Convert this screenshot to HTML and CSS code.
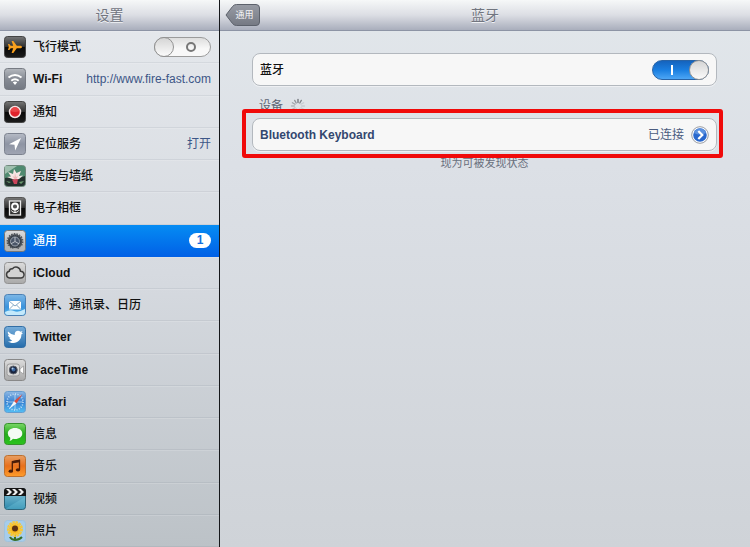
FILE: index.html
```
<!DOCTYPE html>
<html lang="zh-CN">
<head>
  <meta charset="UTF-8" />
  <meta name="viewport" content="width=device-width, initial-scale=1.0" />
  <title>设置</title>
  <link rel="stylesheet" href="styles.css">
</head>
<body>

  <!-- shared gradients -->
  <svg class="defs" width="0" height="0" aria-hidden="true">
    <defs>
      <linearGradient id="g-black" x2="0" y2="1"><stop offset="0" stop-color="#777"/><stop offset=".5" stop-color="#2d2d2d"/><stop offset=".52" stop-color="#080808"/><stop offset="1" stop-color="#1c1c1c"/></linearGradient>
      <linearGradient id="g-gray" x2="0" y2="1"><stop offset="0" stop-color="#b4b8be"/><stop offset=".5" stop-color="#868b94"/><stop offset="1" stop-color="#747983"/></linearGradient>
      <linearGradient id="g-steel" x2="0" y2="1"><stop offset="0" stop-color="#b6bbc6"/><stop offset=".5" stop-color="#8d94a3"/><stop offset="1" stop-color="#a0a5b3"/></linearGradient>
      <linearGradient id="g-silver" x2="0" y2="1"><stop offset="0" stop-color="#dcdcdc"/><stop offset="1" stop-color="#a9a9a9"/></linearGradient>
      <linearGradient id="g-sky" x2="0" y2="1"><stop offset="0" stop-color="#7db7e6"/><stop offset=".6" stop-color="#3b93dc"/><stop offset="1" stop-color="#4bb9f2"/></linearGradient>
      <linearGradient id="g-twitter" x2="0" y2="1"><stop offset="0" stop-color="#78aedb"/><stop offset="1" stop-color="#256cab"/></linearGradient>
      <linearGradient id="g-safari" x2="0" y2="1"><stop offset="0" stop-color="#8fb9e4"/><stop offset=".5" stop-color="#3580d2"/><stop offset="1" stop-color="#55c0f5"/></linearGradient>
      <linearGradient id="g-green" x2="0" y2="1"><stop offset="0" stop-color="#7bd767"/><stop offset=".5" stop-color="#24ab1c"/><stop offset="1" stop-color="#2bc41e"/></linearGradient>
      <linearGradient id="g-orange" x2="0" y2="1"><stop offset="0" stop-color="#e8a065"/><stop offset=".5" stop-color="#e8701c"/><stop offset="1" stop-color="#ff9d2b"/></linearGradient>
      <linearGradient id="g-video" x2="0" y2="1"><stop offset="0" stop-color="#8cc7da"/><stop offset="1" stop-color="#2a87ab"/></linearGradient>
      <linearGradient id="g-back" x2="0" y2="1"><stop offset="0" stop-color="#989ca5"/><stop offset="1" stop-color="#757983"/></linearGradient>
    </defs>
  </svg>

  <aside class="sidebar">
    <header class="bar">
      <h1>设置</h1>
    </header>
    <ul class="menu">
      <li>
        <label class="row" for="airplane">
          <svg class="icon" viewBox="0 0 22 22"><rect x=".5" y=".5" width="21" height="21" rx="3" fill="url(#g-black)" stroke="#444"/><path d="M18 11c0-1-1-1.300-2-1.300h-3.200L9.300 5H7.600l1.600 4.700H6.700L5.300 8H4l.8 3-.8 3h1.300l1.400-1.700h2.500L7.600 17h1.700l3.500-4.700H16c1 0 2-.3 2-1.300z" fill="#f9a01e"/></svg>
          <span class="name">飞行模式</span>
          <input class="switch" type="checkbox" id="airplane">
        </label>
      </li>
      <li>
        <a class="row" href="#wifi">
          <svg class="icon" viewBox="0 0 22 22"><rect x=".5" y=".5" width="21" height="21" rx="3" fill="url(#g-gray)" stroke="#777b83"/><g fill="none" stroke="#fff" stroke-width="2"><path d="M4.500 9.500q6.500-5 13 0M7.300 12.700q3.700-3 7.400 0"/></g><path d="M8.800 14.300q2.200-1.600 4.400 0L11 17z" fill="#fff"/></svg>
          <span class="name latin">Wi-Fi</span>
          <span class="value">http://www.fire-fast.com</span>
        </a>
      </li>
      <li>
        <a class="row" href="#notifications">
          <svg class="icon" viewBox="0 0 22 22"><rect x=".5" y=".5" width="21" height="21" rx="3" fill="url(#g-black)" stroke="#444"/><circle cx="11" cy="11" r="5.500" fill="#e0222b" stroke="#f4e4e4" stroke-width="1.500"/><path d="M6.500 10a4.600 4.600 0 0 1 9 0q-4.500 2-9 0z" fill="#ea4548"/></svg>
          <span class="name">通知</span>
        </a>
      </li>
      <li>
        <a class="row" href="#location">
          <svg class="icon" viewBox="0 0 22 22"><rect x=".5" y=".5" width="21" height="21" rx="3" fill="url(#g-steel)" stroke="#7c828f"/><path d="M17 5L5 11.300l5.500.5.700 5.700z" fill="#fff"/></svg>
          <span class="name">定位服务</span>
          <span class="value">打开</span>
        </a>
      </li>
      <li>
        <a class="row" href="#wallpaper">
          <svg class="icon" viewBox="0 0 22 22"><rect x=".5" y=".5" width="21" height="21" rx="3" fill="#4f8a70" stroke="#70877b"/><path d="M1 1h12L1 9z" fill="#9fbfae"/><path d="M1 13l6-1 8 1 6-2v7q0 3-3 3H4q-3 0-3-3z" fill="#24312e"/><path d="M11 15L3 12l4-.5L4 7l5 2 1-5 2.500 4L17 6l-2 5 4-.5-4 3.500z" fill="#f7e6e4"/><path d="M11 15L8.500 11l2 1 .5-4 1 4 2-1-2 4z" fill="#eeb9b8"/><path d="M8 14.500l6-.5-1 5h-3z" fill="#c9455a"/><path d="M2 16l5 1-2 1zM15 17l5-1-3 3z" fill="#6d9d70"/></svg>
          <span class="name">亮度与墙纸</span>
        </a>
      </li>
      <li>
        <a class="row" href="#frame">
          <svg class="icon" viewBox="0 0 22 22"><rect x=".5" y=".5" width="21" height="21" rx="3" fill="url(#g-black)" stroke="#555"/><rect x="5.500" y="4" width="11" height="14" fill="#333" stroke="#e9e9e9" stroke-width="1.300"/><circle cx="11" cy="9.500" r="3" fill="#555" stroke="#fff" stroke-width="1.800"/><path d="M11 12v4M11 15.500q-3 0-3.500-2M11 15.500q3 0 3.500-2" fill="none" stroke="#fff"/></svg>
          <span class="name">电子相框</span>
        </a>
      </li>
      <li>
        <a class="row active" href="#general" aria-current="page">
          <svg class="icon" viewBox="0 0 22 22"><rect x=".5" y=".5" width="21" height="21" rx="3" fill="url(#g-silver)" stroke="#777"/><circle cx="11" cy="11.500" r="7.200" fill="#39404a" stroke="#52565b" stroke-width="2.500" stroke-dasharray="1.500 1"/><circle cx="11" cy="11.500" r="4.500" fill="#4b5668" stroke="#98a0aa"/><path d="M11 7v4.500l-4 2.300M11 11.500l4 2.300" stroke="#b9bec6" fill="none"/><path d="M1 15l4 1 2 3 4-1 4 1 2-3 4-1v3q0 3-3 3H4q-3 0-3-3z" fill="#b4b5b6"/></svg>
          <span class="name">通用</span>
          <span class="badge">1</span>
        </a>
      </li>
      <li>
        <a class="row" href="#icloud">
          <svg class="icon" viewBox="0 0 22 22"><rect x=".5" y=".5" width="21" height="21" rx="3" fill="url(#g-silver)" stroke="#929292"/><path d="M5.500 16a3.400 3.400 0 0 1-.3-6.700 3 3 0 0 1 3.300-2.500 4.500 4.500 0 0 1 8 2.400A3.400 3.400 0 0 1 16.800 16z" fill="#d3d3d3" stroke="#3d3d3d" stroke-width="1.500"/></svg>
          <span class="name latin">iCloud</span>
        </a>
      </li>
      <li>
        <a class="row" href="#mail">
          <svg class="icon" viewBox="0 0 22 22"><rect x=".5" y=".5" width="21" height="21" rx="3" fill="url(#g-sky)" stroke="#4b80b5"/><path d="M1 18q5-3 9-1t11-2v3q0 3-3 3H4q-3 0-3-3z" fill="#c4e9fb"/><rect x="5" y="7" width="12" height="8.500" fill="#fff"/><path d="M5 7l6 5 6-5M5 15.500l4.500-4.500M17 15.500L12.500 11" stroke="#87aac6" fill="none"/></svg>
          <span class="name">邮件、通讯录、日历</span>
        </a>
      </li>
      <li>
        <a class="row" href="#twitter">
          <svg class="icon" viewBox="0 0 22 22"><rect x=".5" y=".5" width="21" height="21" rx="3" fill="url(#g-twitter)" stroke="#326ea5"/><path d="M4 5.500q2.800 3.200 6.700 3.400c-.5-3.800 3.600-5.300 5.800-3.100l2-.7-1 2 1.500-.2-1.600 1.700c0 5-3.400 8.400-8 8.400-2.400 0-4.200-.6-5.400-1.500 1.700.1 3.200-.3 4.300-1.300-1.500-.2-2.500-1-2.900-2.200h1.300C5 11.500 4.100 10.300 4 8.800l1.300.4C4 8.100 3.500 6.800 4 5.500z" fill="#fff"/></svg>
          <span class="name latin">Twitter</span>
        </a>
      </li>
      <li>
        <a class="row" href="#facetime">
          <svg class="icon" viewBox="0 0 22 22"><rect x=".5" y=".5" width="21" height="21" rx="3" fill="url(#g-silver)" stroke="#888"/><rect x="3" y="5" width="12.500" height="12" rx="2.500" fill="#d9d9d9" stroke="#999"/><path d="M16 10l3.500-3v8L16 12.500z" fill="#fff" stroke="#888" stroke-width=".6"/><circle cx="9.300" cy="11" r="4" fill="#18223c" stroke="#60656e"/><circle cx="9.500" cy="10.500" r="2" fill="#38649c"/><circle cx="8.500" cy="9.500" r="1" fill="#b5cee8"/></svg>
          <span class="name latin">FaceTime</span>
        </a>
      </li>
      <li>
        <a class="row" href="#safari">
          <svg class="icon" viewBox="0 0 22 22"><rect x=".5" y=".5" width="21" height="21" rx="3" fill="url(#g-safari)" stroke="#669cce"/><g stroke="#cde6f8" fill="none"><circle cx="11" cy="11" r="8" stroke-dasharray="1 1.500" stroke-width="1.500"/><path d="M11 3v16M3 11h16" stroke-width=".7"/></g><path d="M18.500 3l-6 9.500-2.500-2.300z" fill="#dc4b3d"/><path d="M5 18l5-7.800 2.500 2.300z" fill="#f4f8fa"/></svg>
          <span class="name latin">Safari</span>
        </a>
      </li>
      <li>
        <a class="row" href="#messages">
          <svg class="icon" viewBox="0 0 22 22"><rect x=".5" y=".5" width="21" height="21" rx="3" fill="url(#g-green)" stroke="#37912d"/><path d="M11 5c4.300 0 7.300 2.400 7.300 5.500S15.300 16 11 16q-1 0-2-.2Q7.500 17.800 5.500 18q1-1.300.8-3.200Q3.800 13 3.800 10.500C3.800 7.400 6.700 5 11 5z" fill="#f5fbf4"/></svg>
          <span class="name">信息</span>
        </a>
      </li>
      <li>
        <a class="row" href="#music">
          <svg class="icon" viewBox="0 0 22 22"><rect x=".5" y=".5" width="21" height="21" rx="3" fill="url(#g-orange)" stroke="#bc702f"/><path d="M8.300 16V6.800l7.200-1.300v9" fill="none" stroke="#4a1c08" stroke-width="1.300"/><path d="M8 6l8-1.400v2.600L8 8.600z" fill="#4a1c08"/><ellipse cx="6.800" cy="16.200" rx="2.200" ry="1.600" fill="#4a1c08"/><ellipse cx="14" cy="14.800" rx="2.200" ry="1.600" fill="#4a1c08"/></svg>
          <span class="name">音乐</span>
        </a>
      </li>
      <li>
        <a class="row" href="#videos">
          <svg class="icon" viewBox="0 0 22 22"><rect x=".5" y=".5" width="21" height="21" rx="3" fill="url(#g-video)" stroke="#2d6479"/><path d="M1 21L21 9v9q0 3-3 3z" fill="#7fd0e4" opacity=".3"/><path d="M0 8V3q0-3 3-3h16q3 0 3 3v5z" fill="#151515"/><path d="M2 1h3l3 3-3 3H2l3-3zM8 1h3l3 3-3 3H8l3-3zM14 1h3l3 3-3 3h-3l3-3z" fill="#eee"/></svg>
          <span class="name">视频</span>
        </a>
      </li>
      <li>
        <a class="row" href="#photos">
          <svg class="icon" viewBox="0 0 22 22"><rect x=".5" y=".5" width="21" height="21" rx="3" fill="#a6cdec" stroke="#a0c2dc"/><path d="M11 12v9M11 20q-4-.5-5-3M11 20q4 0 7-3" stroke="#376d25" stroke-width="2" fill="none"/><circle cx="11" cy="9" r="6" fill="#f6b81d" stroke="#f5c73a" stroke-width="4" stroke-dasharray="2.200 .6"/><circle cx="11" cy="8.500" r="3" fill="#5d3313"/></svg>
          <span class="name">照片</span>
        </a>
      </li>
    </ul>
  </aside>

  <main class="detail">
    <header class="bar">
      <button class="back" type="button">
        <svg viewBox="0 0 35 22" preserveAspectRatio="none" aria-hidden="true"><path d="M1 11L7.500 2.500Q9 .5 11.500.5H31q3.500 0 3.500 3.500v14q0 3.500-3.500 3.500H11.500q-2.500 0-4-2z" fill="url(#g-back)" stroke="#5c616b"/></svg>
        <span>通用</span>
      </button>
      <h2>蓝牙</h2>
    </header>

    <div class="content">
      <label class="cell" for="bluetooth">
        <span class="name">蓝牙</span>
        <input class="switch" type="checkbox" id="bluetooth" checked>
      </label>

      <h3 class="group-title">设备
        <svg class="spinner" viewBox="0 0 16 16" aria-hidden="true"><g stroke="#6f737a" stroke-width="1.300" stroke-linecap="round"><path d="M8 1.500v3"/><path d="M11.300 2.400L9.800 5" opacity=".85"/><path d="M13.600 4.700L11 6.200" opacity=".2"/><path d="M14.500 8h-3" opacity=".2"/><path d="M13.600 11.300L11 9.800" opacity=".2"/><path d="M11.300 13.600L9.800 11" opacity=".25"/><path d="M8 14.500v-3" opacity=".25"/><path d="M4.700 13.600L6.200 11" opacity=".3"/><path d="M2.400 11.300L5 9.800" opacity=".35"/><path d="M1.500 8h3" opacity=".4"/><path d="M2.400 4.700L5 6.200" opacity=".55"/><path d="M4.700 2.400L6.200 5" opacity=".7"/></g></svg>
      </h3>

      <div class="device">
        <a class="cell" href="#keyboard">
          <span class="device-name">Bluetooth Keyboard</span>
          <span class="status">已连接</span>
          <svg class="arrow" viewBox="0 0 18 18" aria-hidden="true"><circle cx="9" cy="9" r="8.300" fill="#fff" stroke="#9a9da3"/><circle cx="9" cy="9" r="6.800" fill="#2867cd"/><path d="M3 7a6.300 6.300 0 0 1 12 0q-6 3-12 0z" fill="#5c91df"/><path d="M7.300 5l4 4-4 4" fill="none" stroke="#fff" stroke-width="2.200"/></svg>
        </a>
      </div>
      <p class="hint">现为可被发现状态</p>
    </div>
  </main>

</body>
</html>
```
FILE: styles.css
```
*, *::before, *::after {
  margin: 0;
  padding: 0;
  box-sizing: border-box;
}
body {
  display: flex;
  min-height: 100vh;
  font-family: "Liberation Sans", "Noto Sans CJK SC", sans-serif;
  font-size: 12px;
  line-height: 16px;
  color: #111;
}
a {
  color: inherit;
  text-decoration: none;
}
.defs {
  position: absolute;
}

/* title bars */
.bar {
  position: relative;
  display: flex;
  align-items: center;
  justify-content: center;
  height: 31px;
  background: linear-gradient(#f6f8f8, #dcdee4 50%, #a9aebc);
  border-bottom: 1px solid #8d94a5;
}
.bar h1, .bar h2 {
  font-size: 14px;
  font-weight: 400;
  line-height: 20px;
  color: #71757f;
  text-shadow: 0 1px 0 #f0f1f4;
}

/* left column */
.sidebar {
  display: flex;
  flex-direction: column;
  flex: none;
  width: 220px;
  background: linear-gradient(#e6e9ed, #d6dae0 50%, #bcc2c7);
  border-right: 1px solid #15171a;
}
.menu {
  display: flex;
  flex-direction: column;
  flex: 1;
  list-style: none;
}
.menu li {
  display: flex;
  flex: 1;
  min-height: 32px;
}
.row {
  display: flex;
  align-items: center;
  flex: 1;
  padding: 0 8px 0 4px;
  border-top: 1px solid rgba(255, 255, 255, 0.15);
  border-bottom: 1px solid rgba(90, 100, 115, 0.1);
}
.row.active {
  color: #fff;
  background: linear-gradient(#058cf3, #0160e6) border-box;
  border-color: transparent;
}
.icon {
  flex: none;
  width: 22px;
  height: 22px;
  margin-right: 7px;
}
.name {
  flex: 1;
  font-weight: 500;
  white-space: nowrap;
}
.name.latin {
  font-weight: 700;
}
.value {
  color: #3d5687;
}
.badge {
  min-width: 22px;
  height: 15px;
  border-radius: 8px;
  background: #fff;
  color: #1670dc;
  font-weight: 700;
  line-height: 15px;
  text-align: center;
}

/* on/off switch */
.switch {
  appearance: none;
  position: relative;
  flex: none;
  width: 57px;
  height: 20px;
  border: 1px solid #9b9b9b;
  border-radius: 10px;
  background: linear-gradient(#dedede, #f8f8f8 60%);
}
.switch::before {
  content: "";
  position: absolute;
  top: -1px;
  left: -1px;
  width: 20px;
  height: 20px;
  border: 1px solid #929292;
  border-radius: 50%;
  background: linear-gradient(#d5d5d5, #fbfbfb);
}
.switch::after {
  content: "";
  position: absolute;
  top: 4px;
  right: 14px;
  width: 10px;
  height: 10px;
  border: 2px solid #777;
  border-radius: 50%;
}
.switch:checked {
  border-color: #2863a6;
  background: linear-gradient(#1563bd, #1a7ee0 50%, #4ca6f5);
}
.switch:checked::before {
  left: auto;
  right: -1px;
}
.switch:checked::after {
  left: 18px;
  right: auto;
  width: 2px;
  border: none;
  border-radius: 0;
  background: #fff;
}

/* right column */
.detail {
  flex: 1;
  min-width: 0;
  background: linear-gradient(#e2e7eb, #dce0e6 30%, #cfd3d8);
}
.back {
  position: absolute;
  top: 4px;
  left: 5px;
  width: 35px;
  height: 22px;
  padding-left: 4px;
  border: none;
  background: none;
  color: #f4f5f7;
  font-family: inherit;
  font-size: 9px;
  line-height: 22px;
}
.back svg {
  position: absolute;
  top: 0;
  left: 0;
  width: 100%;
  height: 100%;
}
.back span {
  position: relative;
}
.content {
  padding: 22px 33px 22px 32px;
}
.cell {
  display: flex;
  align-items: center;
  height: 33px;
  padding: 0 7px;
  border: 1px solid #b3b8be;
  border-radius: 8px;
  background: #f7f7f7;
  box-shadow: 0 1px 0 #eef0f3;
}
.group-title {
  display: flex;
  align-items: center;
  gap: 7px;
  height: 16px;
  margin: 12px 0 4px;
  padding-left: 7px;
  color: #5b6472;
  font-size: 12px;
  font-weight: 400;
}
.spinner {
  width: 16px;
  height: 16px;
}
.device {
  position: relative;
}
/* highlight frame around the paired device */
.device::after {
  content: "";
  position: absolute;
  inset: -9px -6px -7px -10px;
  border: 4px solid #f00a0a;
  border-radius: 3px;
  pointer-events: none;
}
.device-name {
  flex: 1;
  color: #33476f;
  font-weight: 700;
}
.status {
  color: #4b5c80;
}
.arrow {
  width: 18px;
  height: 18px;
  margin-left: 7px;
}
.hint {
  margin-top: 4px;
  color: #686f7c;
  font-size: 11px;
  text-align: center;
}
```
